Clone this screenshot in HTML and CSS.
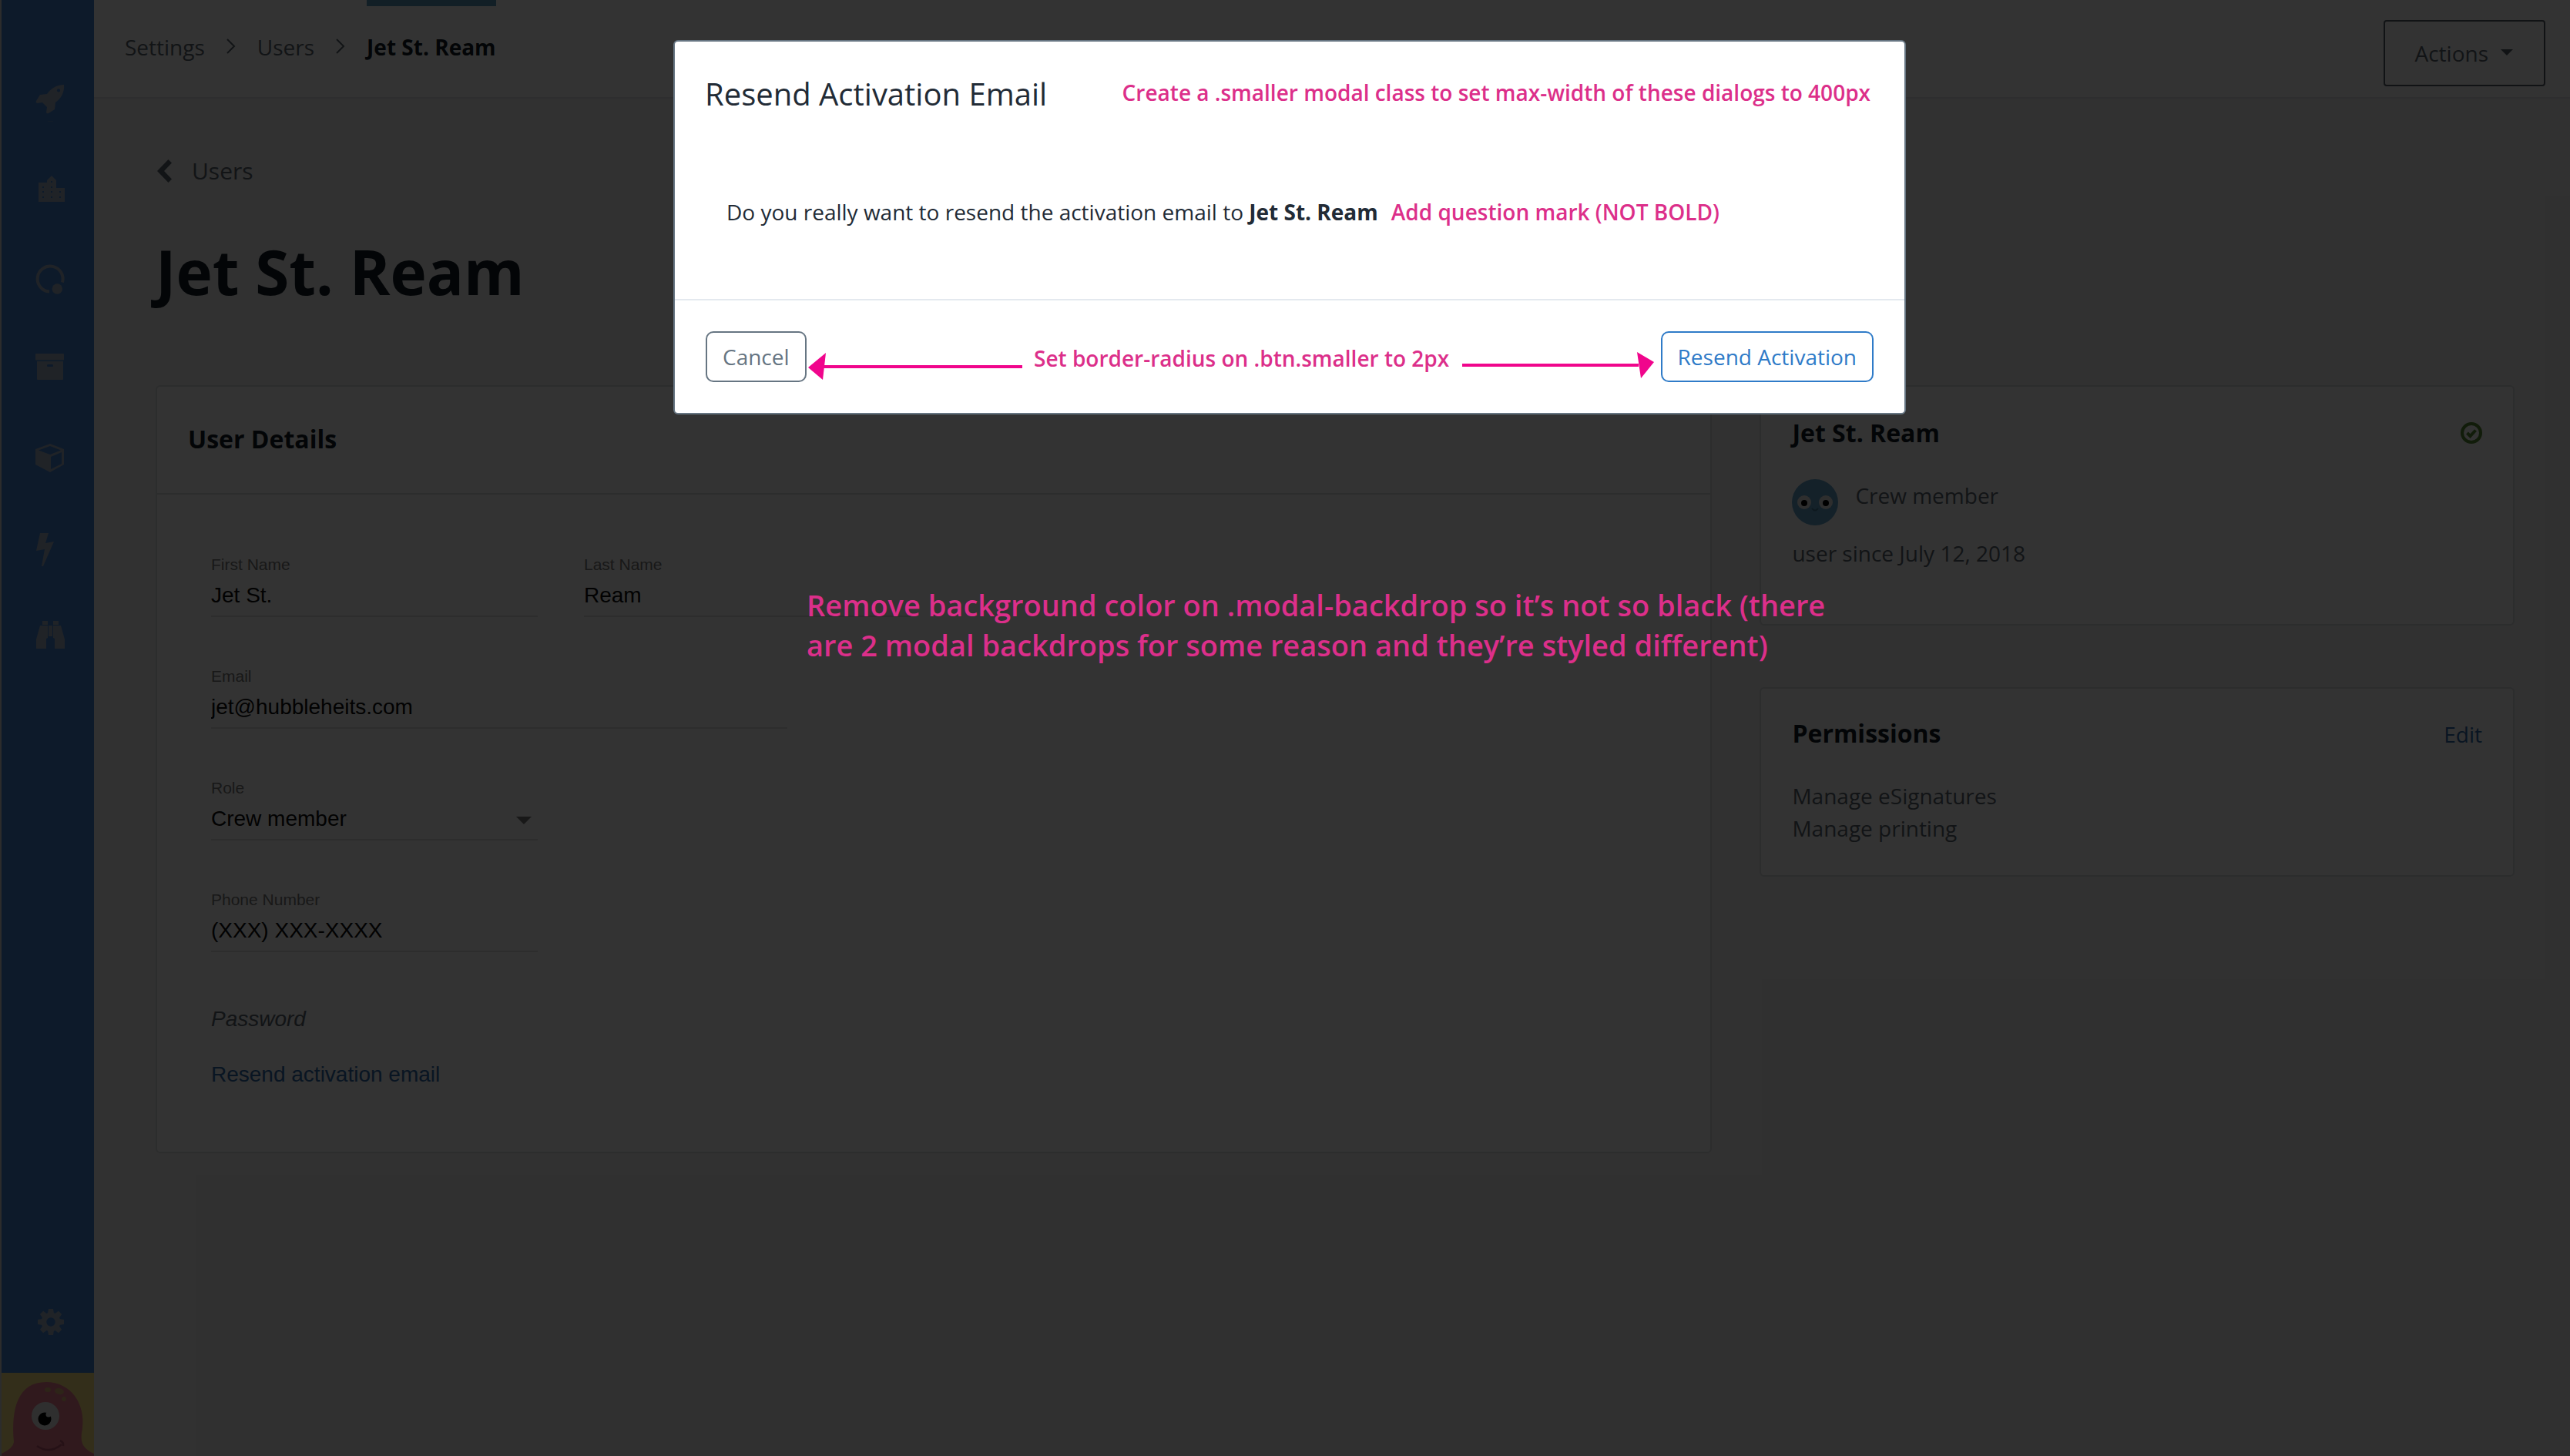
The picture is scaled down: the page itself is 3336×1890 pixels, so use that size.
FILE: index.html
```html
<!DOCTYPE html>
<html lang="en">
<head>
<meta charset="utf-8">
<title>Jet St. Ream – Users – Settings</title>
<link rel="stylesheet" href="styles.css">
</head>
<body>
<div class="app">
  <aside class="sidebar">
    <nav class="nav" aria-label="Main">
      <a class="nav-item" href="#" aria-label="Launch">
        <svg class="nav-icon" viewBox="-4 -4 56 56"><path fill-rule="evenodd" d="M45 5C46 15 41 23 34 28L33 37L25 42Q23 43 22 41L23 34L17 28L10 29Q8 28 9 26L14 18L23 17C28 10 35 5 45 5ZM38 10.3a2.1 2.1 0 1 0 .01 0Z"/><path opacity=".3" d="M24 52h7v1h-7z"/></svg>
      </a>
      <a class="nav-item" href="#" aria-label="Properties">
        <svg class="nav-icon" viewBox="-4 -4 56 56"><path fill-rule="evenodd" d="M12 16H23V13L29 7L35 13V23H46V41H12ZM17 21v2h2v-2zM17 27v2h2v-2zM17 34v2h2v-2zM28 14v2h2v-2zM28 21v2h2v-2zM28 27v2h2v-2zM28 34v2h2v-2zM39 27v2h2v-2zM39 34v2h2v-2z"/></svg>
      </a>
      <a class="nav-item" href="#" aria-label="Orbit">
        <svg class="nav-icon" viewBox="-4 -4 56 56"><path class="stroke" d="M43 29.500A16.500 16.500 0 1 0 26 41.500"/><circle cx="36.300" cy="38" r="6.700"/></svg>
      </a>
      <a class="nav-item" href="#" aria-label="Archive">
        <svg class="nav-icon" viewBox="-4 -4 56 56"><rect x="8" y="6" width="37" height="8.500" rx="1"/><path fill-rule="evenodd" d="M10 16H44V39Q44 40 43 40H11Q10 40 10 39ZM24 20Q23 20 23 21.500T24 23H30Q31 23 31 21.500T30 20Z"/></svg>
      </a>
      <a class="nav-item" href="#" aria-label="Products">
        <svg class="nav-icon" viewBox="-4 -4 56 56"><path fill-rule="evenodd" d="M27 7L45 14V34L27 44L8 34V14ZM27 10L12 15.500L27 21L41 15.500ZM42 18L28 24V40L42 33Z"/></svg>
      </a>
      <a class="nav-item" href="#" aria-label="Actions">
        <svg class="nav-icon" viewBox="-4 -4 56 56"><path d="M14 7H25L21 20L32 18L18 50H16L20 28L9 30Z"/></svg>
      </a>
      <a class="nav-item" href="#" aria-label="Search">
        <svg class="nav-icon" viewBox="-4 -4 56 56"><path d="M17 5h7v5h-7zM31 5h7v5h-7zM25 11h5v14h-5zM14 11H24V27L22 28V41H9V29ZM41 11H31V27L33 28V41H46V29Z"/></svg>
      </a>
    </nav>
    <a class="nav-item nav-settings" href="#" aria-label="Settings">
      <svg class="nav-icon" viewBox="-28 -28 56 56"><g><path fill-rule="evenodd" d="M0-12.500A12.500 12.500 0 1 0 .01-12.500ZM0-5.700A5.700 5.700 0 1 1-.01-5.700Z"/><path id="tooth" d="M-4-11L-3-17H3L4-11Z"/><use href="#tooth" transform="rotate(45)"/><use href="#tooth" transform="rotate(90)"/><use href="#tooth" transform="rotate(135)"/><use href="#tooth" transform="rotate(180)"/><use href="#tooth" transform="rotate(225)"/><use href="#tooth" transform="rotate(270)"/><use href="#tooth" transform="rotate(315)"/></g></svg>
    </a>
    <svg class="me" viewBox="0 0 120 108" role="img" aria-label="My account">
      <rect width="120" height="108" fill="#ffe682"/>
      <path fill="#f07d91" d="M0 108V105Q15 98 16 90C12 45 22 12 58 12C90 12 109 40 105 72C102 88 103 97 120 105V108Z"/>
      <g fill="#e1b478"><ellipse cx="60" cy="22" rx="4" ry="3"/><ellipse cx="75" cy="24" rx="6" ry="4" transform="rotate(15 75 24)"/><circle cx="81" cy="34" r="3"/></g>
      <circle cx="57" cy="56" r="18" fill="#e8ecec"/><circle cx="56" cy="60" r="8.500" fill="#000"/><circle cx="61" cy="54" r="3.500" fill="#e8ecec"/>
      <path d="M46 95Q62 106 78 93M76 88Q81 90 80 95" fill="none" stroke="#b9556e" stroke-width="2.500"/>
    </svg>
  </aside>

  <div class="page">
    <header class="topbar">
      <ol class="crumbs">
        <li><a href="#">Settings</a></li>
        <li class="sep" aria-hidden="true"><svg viewBox="0 0 14 22"><path d="M2 2L11 11L2 20"/></svg></li>
        <li><a href="#">Users</a></li>
        <li class="sep" aria-hidden="true"><svg viewBox="0 0 14 22"><path d="M2 2L11 11L2 20"/></svg></li>
        <li class="current" aria-current="page">Jet St. Ream</li>
      </ol>
      <button class="actions" type="button">Actions<span class="caret"></span></button>
    </header>

    <main class="content">
      <a class="back" href="#"><svg viewBox="-2 0 22 30"><path d="M14.500 0L19 4.500L9 15L19 25.500L14.500 30L0 15Z"/></svg>Users</a>
      <h1>Jet St. Ream</h1>
      <div class="columns">
        <section class="card">
          <h2 class="card-head">User Details</h2>
          <form class="fields">
            <div class="field"><label for="first">First Name</label><input id="first" type="text" value="Jet St."></div>
            <div class="field"><label for="last">Last Name</label><input id="last" type="text" value="Ream"></div>
            <div class="field wide"><label for="email">Email</label><input id="email" type="email" value="jet@hubbleheits.com"></div>
            <div class="field start select"><label for="role">Role</label><select id="role"><option>Crew member</option></select></div>
            <div class="field start"><label for="phone">Phone Number</label><input id="phone" type="tel" value="(XXX) XXX-XXXX"></div>
            <div class="password">
              <em>Password</em>
              <a href="#">Resend activation email</a>
            </div>
          </form>
        </section>

        <div class="side">
          <section class="card panel panel-user">
            <div class="panel-head">
              <h2>Jet St. Ream</h2>
              <svg class="ok" viewBox="0 0 28 28" role="img" aria-label="Active"><circle cx="14" cy="14" r="12"/><path d="M8.500 14L12.500 18L19.500 10.500"/></svg>
            </div>
            <div class="role">
              <svg class="face" viewBox="0 0 60 60" aria-hidden="true"><circle cx="30" cy="30" r="30" fill="#64a5cd"/><g fill="#e6e6e6"><circle cx="16" cy="30" r="9"/><circle cx="44" cy="30" r="9"/></g><circle cx="16" cy="31" r="4" fill="#000"/><circle cx="44" cy="31" r="4" fill="#000"/><path d="M26 38Q30 43 34 38" fill="none" stroke="#417896" stroke-width="2"/></svg>
              <span>Crew member</span>
            </div>
            <p>user since July 12, 2018</p>
          </section>
          <section class="card panel">
            <div class="panel-head">
              <h2>Permissions</h2>
              <a href="#">Edit</a>
            </div>
            <p>Manage eSignatures</p>
            <p>Manage printing</p>
          </section>
        </div>
      </div>
    </main>
  </div>
</div>

<div class="backdrop">
  <div class="modal" role="dialog" aria-modal="true" aria-labelledby="modal-title">
    <div class="modal-head">
      <h2 id="modal-title">Resend Activation Email</h2>
      <p class="note">Create a .smaller modal class to set max-width of these dialogs to 400px</p>
    </div>
    <div class="modal-body">
      <p>Do you really want to resend the activation email to <strong>Jet St. Ream</strong></p>
      <p class="note">Add question mark (NOT BOLD)</p>
    </div>
    <div class="modal-foot">
      <button class="btn" type="button">Cancel</button>
      <span class="arrow arrow-left"><svg viewBox="0 0 24 36"><path d="M0 19L23 0L19 35Z"/></svg><i></i></span>
      <p class="note">Set border-radius on .btn.smaller to 2px</p>
      <span class="arrow arrow-right"><i></i><svg viewBox="0 0 24 36"><path d="M24 14L2 1L7 35Z"/></svg></span>
      <button class="btn btn-primary" type="button">Resend Activation</button>
    </div>
  </div>
  <p class="note note-big">Remove background color on .modal-backdrop so it’s not so black (there are 2 modal backdrops for some reason and they’re styled different)</p>
</div>
</body>
</html>
```
FILE: styles.css
```css
* { box-sizing: border-box; }

body {
  margin: 0;
  background: #f2f2f2;
  color: #5b6770;
  font: 28px/42px "Open Sans", "Noto Sans", sans-serif;
}

h1, h2, p, ol { margin: 0; padding: 0; }
a { color: inherit; text-decoration: none; }
svg { display: block; flex: none; }

.app {
  display: flex;
  min-height: 100vh;
  border-left: 2px solid #dcdcdc;
}

/* Sidebar */
.sidebar {
  display: flex;
  flex-direction: column;
  flex: none;
  width: 120px;
  background: #4182d2;
}
.nav { flex: 1; padding-top: 71px; }
.nav-item {
  display: flex;
  align-items: center;
  justify-content: center;
  height: 116px;
}
.nav-icon {
  width: 56px;
  height: 56px;
  overflow: visible;
  fill: #a0afc3;
}
.nav-icon .stroke {
  fill: none;
  stroke: #a0afc3;
  stroke-width: 4;
}
.nav-settings { margin-bottom: 8px; padding-left: 8px; }
.me { width: 120px; height: 108px; }

/* Top bar */
.page { flex: 1; min-width: 0; }
.topbar {
  display: flex;
  justify-content: space-between;
  align-items: flex-start;
  height: 128px;
  padding: 0 32px 0 40px;
  background: #fff;
  border-bottom: 2px solid #e4e6e8;
}
.crumbs {
  display: flex;
  gap: 27px;
  list-style: none;
}
.crumbs li {
  padding-top: 32px;
  border-top: 8px solid transparent;
}
.crumbs .sep svg {
  width: 14px;
  height: 22px;
  margin-top: 9px;
  fill: none;
  stroke: #5b6770;
  stroke-width: 2;
}
.crumbs .current {
  border-top-color: #5a9bbe;
  color: #0f1923;
  font-weight: 700;
}
.actions {
  display: flex;
  align-items: center;
  gap: 16px;
  height: 86px;
  margin-top: 26px;
  padding: 0 40px 0 38px;
  background: none;
  border: 2px solid #555f69;
  border-radius: 4px;
  color: #5b6770;
  font: inherit;
}
.caret {
  margin-bottom: 2px;
  border: 8px solid transparent;
  border-top-color: #555f69;
  border-bottom: 0;
}

/* Content */
.content { padding: 74px 72px 80px 80px; }
.back {
  display: flex;
  align-items: center;
  gap: 25px;
  width: max-content;
  font-size: 30px;
  line-height: 40px;
}
.back svg {
  width: 22px;
  height: 30px;
  fill: #5b6770;
}
h1 {
  margin: 62px 0 100px;
  color: #0f1923;
  font-size: 80px;
  line-height: 96px;
}
h2 {
  color: #0f1923;
  font-size: 32px;
  line-height: 44px;
}
.columns {
  display: grid;
  grid-template-columns: minmax(0, 33fr) minmax(0, 16fr);
  align-items: start;
  gap: 62px;
}
.card {
  background: #fff;
  border: 2px solid #dadfe2;
  border-radius: 6px;
}
.card-head {
  padding: 46px 40px 48px;
  border-bottom: 2px solid #dadfe2;
}
.fields {
  display: grid;
  grid-template-columns: 424px 424px;
  gap: 65px 60px;
  padding: 79px 70px 80px;
  font-family: "Liberation Sans", Arial, sans-serif;
}
.field { display: grid; gap: 8px; }
.start { grid-column: 1; }
.wide { grid-column: 1 / -1; max-width: 748px; }
.field label {
  color: #787878;
  font-size: 21px;
  line-height: 24px;
}
.field input,
.field select {
  width: 100%;
  height: 48px;
  margin: 0;
  padding: 0 0 6px;
  appearance: none;
  background: none;
  border: 0;
  border-bottom: 2px solid #e0e0e0;
  border-radius: 0;
  color: #0a0a0a;
  font: 28px/40px "Liberation Sans", Arial, sans-serif;
}
.select { position: relative; }
.select::after {
  content: "";
  position: absolute;
  right: 8px;
  bottom: 21px;
  border: 10px solid transparent;
  border-top-color: #787878;
  border-bottom: 0;
}
.password {
  display: grid;
  grid-column: 1;
  gap: 32px;
  padding-top: 2px;
  line-height: 40px;
}
.password a, .panel-head a { color: #2d69aa; }

.side { display: grid; gap: 80px; }
.panel { padding: 36px 40px 40px; }
.panel-user { padding: 38px 40px 71px; }
.panel-head {
  display: flex;
  justify-content: space-between;
  align-items: flex-end;
  margin-bottom: 38px;
}
.ok {
  width: 28px;
  height: 28px;
  margin-bottom: 8px;
  fill: none;
  stroke: #558c32;
  stroke-width: 4;
}
.role {
  display: flex;
  gap: 22px;
  margin-bottom: 15px;
}
.face { width: 60px; height: 60px; }

/* Dialog */
.backdrop {
  position: absolute;
  inset: 0;
  padding: 52px 0 0 12px;
  background: rgba(0, 0, 0, .8);
}
.modal {
  max-width: 1600px;
  margin: 0 auto;
  background: #fff;
  border: 2px solid #667582;
  border-radius: 6px;
  color: #222b36;
}
.modal-head {
  display: flex;
  justify-content: space-between;
  align-items: center;
  padding: 41px 44px 0 39px;
}
.modal-head h2 {
  color: #222b36;
  font-size: 40px;
  font-weight: 400;
  line-height: 54px;
}
.note {
  color: #dc2f8a;
  font-weight: 600;
}
.modal-head .note { padding-bottom: 4px; }
.modal-body {
  display: flex;
  gap: 17px;
  padding: 105px 67px 92px;
  border-bottom: 2px solid #e4e9ef;
}
.modal-foot {
  display: flex;
  align-items: center;
  padding: 40px;
}
.modal-foot .note { padding-top: 4px; }
.btn {
  height: 66px;
  padding: 0 20px;
  background: #fff;
  border: 2px solid #667582;
  border-radius: 10px;
  color: #667582;
  font: inherit;
}
.btn-primary { border-color: #2f7bc8; color: #2f7bc8; }
.arrow {
  display: flex;
  align-items: center;
  height: 36px;
}
.arrow svg {
  width: 24px;
  height: 36px;
  fill: #f0058c;
}
.arrow i {
  flex: 1;
  height: 4px;
  background: #f0058c;
}
.arrow-left { flex: 278; margin: 26px 15px 0 2px; }
.arrow-left svg { margin-right: -4px; }
.arrow-right { flex: 248; margin: 22px 9px 0 17px; }
.arrow-right svg { margin-left: -4px; }
.note-big {
  position: absolute;
  top: 759px;
  left: 1047px;
  width: 1360px;
  font-size: 38px;
  line-height: 52px;
}
```
